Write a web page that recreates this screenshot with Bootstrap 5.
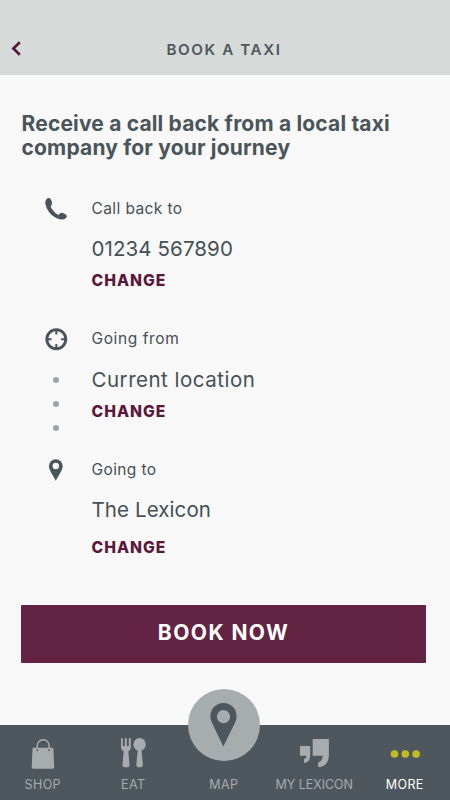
<!DOCTYPE html>
<html lang="en">
<head>
<meta charset="utf-8">
<meta name="viewport" content="width=device-width, initial-scale=1">
<title>Book a taxi</title>
<link href="https://cdn.jsdelivr.net/npm/bootstrap@5.3.0/dist/css/bootstrap.min.css" rel="stylesheet">
<style>
body{font-family:Inter,"Open Sans",sans-serif;background:#f8f8f8;color:#455056;width:450px;height:800px;overflow:hidden}
.topbar{height:74.5px;background:#d6dad9;padding-top:26px}
.back{width:32px;padding-left:11px;line-height:0;margin-top:-4px}
.screen-title{font-size:15.2px;font-weight:600;letter-spacing:1.6px;padding-right:34px;color:#50575c}
.lead-in{font-size:21px;font-weight:700;line-height:24px;letter-spacing:.17px;margin:37px 0 0 21.5px;color:#4a555a;white-space:nowrap}
.steps{margin-top:37px}
.step{height:130.5px;padding-left:41px}
.step-icon{width:30px;line-height:0}
.step-body{margin-left:20.5px;white-space:nowrap}
.caption-line{font-size:15.5px;line-height:24px;letter-spacing:.4px}
.value-line{font-size:20.5px;line-height:30px;margin-top:13.5px;letter-spacing:.1px}
.airy .caption-line{letter-spacing:.6px}
.airy .value-line{letter-spacing:.5px}
.change{font-size:15.7px;line-height:20px;font-weight:800;letter-spacing:1px;color:#5a1739;margin-top:7px;text-decoration:none}
.change-low{margin-top:13px}
.trail{gap:18px;margin-top:26px}
.trail span{width:6px;height:6px;border-radius:50%;background:#a0a3a5}
.book{height:58px;margin:17px 24px 0 21px;background:#632342;border-radius:1px;color:#fff;font-size:21px;font-weight:700;letter-spacing:1.45px;padding:0 0 2px}
.tabs{height:75px;background:#4f575e;margin-left:-2.5px;width:452.5px}
.tab{color:#a4abaf;width:90.5px;font-size:12.5px;line-height:16px;letter-spacing:.4px;padding-bottom:7px;text-decoration:none;white-space:nowrap}
.tab-long{letter-spacing:-.05px}
.tab svg{display:block}
.glyph{height:33px;margin-top:12px}
.map-disc{width:72px;height:72px;border-radius:50%;background:#a7acaf;margin-top:-36px}
</style>
<script src="https://cdn.jsdelivr.net/npm/bootstrap@5.3.0/dist/js/bootstrap.bundle.min.js" defer></script>
</head>
<body class="d-flex flex-column">
<header class="topbar d-flex align-items-center flex-shrink-0">
  <a class="back" href="#" aria-label="Back"><svg width="11" height="15" viewBox="0 0 11 15"><path d="M8.800 1.200 2.400 7.500 8.800 13.800" fill="none" stroke="#5a1739" stroke-width="2.700"/></svg></a>
  <div class="screen-title flex-grow-1 text-center">BOOK A TAXI</div>
</header>
<main class="flex-grow-1 d-flex flex-column">
  <h1 class="lead-in mb-0">Receive a call back from a local taxi<br>company for your journey</h1>
  <div class="steps">
  <section class="step d-flex">
    <div class="step-icon d-flex justify-content-center"><svg width="24" height="24" viewBox="0 0 24 24"><path d="M4 1.100C1.800 2.300.8 4.300 1.400 7C3.200 15 9.600 21.500 17.500 22.500Q20.800 22.800 22.800 20Q23.400 18.300 21 17Q17.500 15 16.100 16.200L14.500 17.900Q9.200 15.100 6.700 9.700L7.900 7.600Q8.800 5.800 7 2.400Q6 .3 4 1.100Z" fill="#4a555a"/></svg></div>
    <div class="step-body d-flex flex-column align-items-start"><span class="caption-line">Call back to</span><span class="value-line">01234 567890</span><a class="change" href="#">CHANGE</a></div>
  </section>
  <section class="step airy d-flex">
    <div class="step-icon d-flex flex-column align-items-center"><svg width="24" height="24" viewBox="0 0 24 24"><circle cx="12.300" cy="12.200" r="9.500" fill="none" stroke="#4a555a" stroke-width="2.900"/><path d="M12.300 3v4.500M12.300 17v4.500M3 12.200h4.500M17 12.200h4.500" stroke="#4a555a" stroke-width="2"/></svg>
      <div class="trail d-flex flex-column"><span></span><span></span><span></span></div></div>
    <div class="step-body d-flex flex-column align-items-start"><span class="caption-line">Going from</span><span class="value-line">Current location</span><a class="change" href="#">CHANGE</a></div>
  </section>
  <section class="step d-flex">
    <div class="step-icon d-flex justify-content-center"><svg width="24" height="24" viewBox="0 0 24 24"><path fill-rule="evenodd" d="M11.800 1.200A6.900 6.900 0 0 0 4.900 8.100C4.900 12 9 17.500 11.800 22.700C14.600 17.500 18.700 12 18.700 8.100A6.900 6.900 0 0 0 11.800 1.200ZM11.800 4.800A3.200 3.200 0 1 1 11.800 11.200A3.200 3.200 0 0 1 11.800 4.800Z" fill="#4a555a"/></svg></div>
    <div class="step-body d-flex flex-column align-items-start"><span class="caption-line">Going to</span><span class="value-line">The Lexicon</span><a class="change change-low" href="#">CHANGE</a></div>
  </section>
  </div>
  <button class="book btn d-flex align-items-center justify-content-center" type="button">BOOK NOW</button>
</main>
<nav class="tabs d-flex flex-shrink-0">
  <a class="tab d-flex flex-column align-items-center justify-content-between" href="#"><span class="glyph"><svg width="24" height="33" viewBox="0 0 24 33"><path d="M6.200 11.500V9A6 6.300 0 0 1 18.200 9V11.500" fill="none" stroke="#a7acaf" stroke-width="1.500"/><path fill-rule="evenodd" d="M2.500 10.800H21.300Q22.300 10.800 22.400 12L23.200 30Q23.200 31.800 21.500 31.800H2.300Q.6 31.800 .7 30L1.500 12Q1.600 10.800 2.500 10.800ZM5.500 12.200V14H7V12.200ZM17.300 12.200V14H18.800V12.200Z" fill="#a7acaf"/></svg></span>SHOP</a>
  <a class="tab d-flex flex-column align-items-center justify-content-between" href="#"><span class="glyph"><svg width="26" height="33" viewBox="0 0 26 33"><path d="M1 1.200H2.800V9H4.800V1.200H6.800V9H8.800V1.200H10.800V10.500Q10.800 13 8.300 14.300L9.500 28Q9.500 30.300 6 30.300T2.500 28L3.700 14.300Q1 13 1 10.500Z" fill="#a7acaf"/><ellipse cx="19.600" cy="7.500" rx="6.200" ry="6.500" fill="#a7acaf"/><path d="M17.800 12H21.400L22.900 28Q22.800 30.300 19.600 30.300T16.300 28Z" fill="#a7acaf"/></svg></span>EAT</a>
  <a class="tab d-flex flex-column align-items-center justify-content-between" href="#"><span class="map-disc d-flex justify-content-center"><svg width="28" height="60" viewBox="0 0 28 60"><path fill-rule="evenodd" d="M13.500 14A13.100 13.100 0 0 0 .4 27.200C.4 30 1.200 32 2.200 34.200L13.300 57.500L24.800 34.200C25.800 32 26.600 30 26.600 27.200A13.100 13.100 0 0 0 13.500 14ZM13.500 21A6.600 6.600 0 1 1 13.500 34.200A6.600 6.600 0 0 1 13.500 21Z" fill="#4f575e"/></svg></span>MAP</a>
  <a class="tab tab-long d-flex flex-column align-items-center justify-content-between" href="#"><span class="glyph"><svg width="30" height="33" viewBox="0 0 30 33"><path d="M1 9H11.200V18Q11.200 25.500 5 26V22.300Q7.500 21.500 7.500 18.700H1ZM13.700 2H29.900V17Q29.900 29.500 19.200 30.300V25.300Q23.700 24 23.700 18.700H13.700Z" fill="#a7acaf"/></svg></span>MY LEXICON</a>
  <a class="tab text-white d-flex flex-column align-items-center justify-content-between" href="#"><span class="glyph"><svg width="30" height="33" viewBox="0 0 30 33" fill="#c1bd20"><circle cx="4.500" cy="17" r="3.800"/><circle cx="15.300" cy="17" r="3.800"/><circle cx="26.100" cy="17" r="3.800"/></svg></span>MORE</a>
</nav>
</body>
</html>
